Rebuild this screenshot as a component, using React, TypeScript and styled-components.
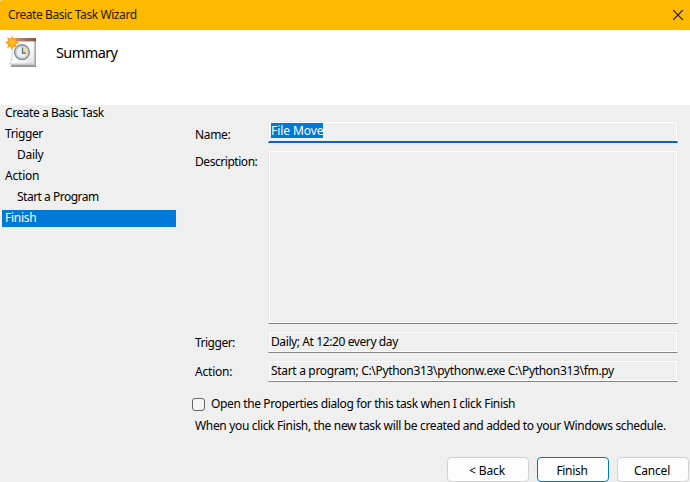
import React from "react";
import styled, { createGlobalStyle } from "styled-components";

const GlobalStyle = createGlobalStyle`
  * { box-sizing: border-box; }
  body { margin: 0; background: #efefef; overflow: hidden; }
`;

const Dialog = styled.div`
  width: 690px;
  height: 482px;
  display: flex;
  flex-direction: column;
  background: #efefef;
  color: #000;
  font: 12px/16px "Noto Sans", "Open Sans", sans-serif;
  overflow: hidden;
  white-space: nowrap;
`;

const Label = styled.span<{ $track?: number }>`
  letter-spacing: ${(p) => p.$track ?? -0.2}px;
`;

const TitleBar = styled.header`
  height: 30px;
  flex: none;
  display: flex;
  align-items: center;
  justify-content: space-between;
  padding: 0 6px 0 8px;
  background: #ffb900;
  color: #1f1800;
  border-top-left-radius: 2px;
`;

const CloseButton = styled.button`
  width: 12px;
  height: 12px;
  padding: 0;
  border: 0;
  background: none;
  svg { display: block; }
`;

const Banner = styled.div`
  height: 75px;
  flex: none;
  display: flex;
  align-items: flex-start;
  background: #fff;
  padding: 5px 0 0 4px;
`;

const Heading = styled.h1`
  margin: 7px 0 0 18px;
  font-size: 14.5px;
  line-height: 20px;
  font-weight: 400;
`;

const Body = styled.div`
  flex: 1;
  display: flex;
  min-height: 0;
`;

const Steps = styled.nav`
  width: 176px;
  flex: none;
  padding-left: 2px;
  display: flex;
  flex-direction: column;
  gap: 4px;
`;

const Step = styled.div<{ $nested?: boolean; $active?: boolean }>`
  height: 17px;
  padding-left: ${(p) => (p.$nested ? 15 : 3)}px;
  line-height: 16px;
  background: ${(p) => (p.$active ? "#0078d7" : "transparent")};
  color: ${(p) => (p.$active ? "#fff" : "#000")};
`;

const Content = styled.main`
  flex: 1;
  display: flex;
  flex-direction: column;
  padding: 16px 0 0 19px;
`;

const Form = styled.div`
  display: grid;
  grid-template-columns: 73px 410px;
  grid-template-rows: 22px 174px 22px 22px;
  row-gap: 7px;
`;

const FieldName = styled.label<{ $drop?: number }>`
  padding-top: ${(p) => p.$drop ?? 4}px;
`;

const Field = styled.div`
  border: 1px solid #e9e9e9;
  border-bottom-color: #858585;
  box-shadow: inset 1px 1px 0 #fff, inset -1px -1px 0 #fff;
  padding: 2px 0 0 2px;
  line-height: 16px;
`;

const FocusedField = styled(Field)`
  border-bottom: 2px solid #0067c0;
  box-shadow: inset 1px 1px 0 #fff, inset -1px 0 0 #fff;
  padding-top: 1px;
`;

const Selection = styled.span`
  display: inline-block;
  height: 15px;
  line-height: 16px;
  background: #0078d7;
  color: #fff;
`;

const Option = styled.label`
  display: flex;
  align-items: center;
  gap: 6px;
  height: 16px;
  margin: 14px 0 0 -3px;
`;

const CheckBox = styled.span`
  width: 13px;
  height: 13px;
  border: 1px solid #666;
  border-radius: 3px;
  background: #f5f5f5;
`;

const Note = styled.p`
  margin: 6px 0 0;
`;

const Actions = styled.footer`
  display: flex;
  justify-content: flex-end;
  gap: 8px;
  margin: 23px 1px 0 0;
`;

const Button = styled.button<{ $width: number; $primary?: boolean }>`
  width: ${(p) => p.$width}px;
  height: 25px;
  padding: 2px 2px 0 0;
  border: 1px solid ${(p) => (p.$primary ? "#0078d4" : "#d0d0d0")};
  border-radius: 4px;
  background: #fdfdfd;
  color: #000;
  font: inherit;
`;

const TaskIcon = () => (
  <svg width="34" height="34" viewBox="0 0 34 34">
    <defs>
      <linearGradient id="paper" x1="0" y1="0" x2="1" y2="1">
        <stop offset="0" stopColor="#fff" />
        <stop offset="0.6" stopColor="#fafafa" />
        <stop offset="1" stopColor="#dedede" />
      </linearGradient>
      <linearGradient id="binding" x1="0" y1="0" x2="1" y2="0">
        <stop offset="0" stopColor="#c99b87" />
        <stop offset="1" stopColor="#855543" />
      </linearGradient>
      <radialGradient id="sun">
        <stop offset="0" stopColor="#ffc52e" />
        <stop offset="1" stopColor="#fba318" />
      </radialGradient>
    </defs>
    <path d="M7 29.5h23V4h2v28H7z" fill="#929292" />
    <path d="M7.5 29.5h23V6h.8v24.3H7.5z" fill="#d2d2d2" />
    <path d="M8 4H30.6v25H5.5Q8 27 8 22z" fill="url(#paper)" stroke="#b5b5b5" strokeWidth=".6" />
    <path d="M8 3h24v3.4H8z" fill="url(#binding)" />
    <circle cx="18" cy="17.2" r="7.3" fill="#dce2e5" stroke="#8a9297" strokeWidth="1.6" />
    <circle cx="18" cy="17.2" r="5.6" fill="#e9f0f5" stroke="#b8c0c5" strokeWidth=".6" />
    <path d="M18.5 17.7V11.7A5.4 5.4 0 0 1 22.5 20z" fill="#f5df9b" />
    <path d="M18.5 12.5v5.6H22" fill="none" stroke="#4b6585" strokeWidth="1.2" />
    <path d="M8.2 .7l1.3 3.1 3.7-1.6-1.4 3.6 3.5 1.9-3.5 1.5 1.4 3.8-3.7-1.4-1.4 3.5-1.6-3.5-3.5 1.4 1.3-3.8L1.1 7.7l3.2-1.9L3 2.3l3.5 1.5z" fill="#f99d1c" />
    <circle cx="8.2" cy="7.7" r="4.3" fill="url(#sun)" />
  </svg>
);

const steps = [
  { name: "Create a Basic Task", track: -0.42 },
  { name: "Trigger", track: -0.4 },
  { name: "Daily", nested: true, track: -0.3 },
  { name: "Action", track: -0.2 },
  { name: "Start a Program", nested: true, track: -0.5 },
  { name: "Finish", active: true, track: -0.25 },
];

export default function App() {
  return (
    <>
      <GlobalStyle />
      <Dialog>
        <TitleBar>
          <Label $track={-0.42}>Create Basic Task Wizard</Label>
          <CloseButton aria-label="Close">
            <svg width="12" height="12" viewBox="0 0 12 12">
              <path d="M1.2 1.2l9.6 9.6m0-9.6l-9.6 9.6" stroke="#201b0b" strokeWidth="1.2" />
            </svg>
          </CloseButton>
        </TitleBar>
        <Banner>
          <TaskIcon />
          <Heading><Label $track={-0.6}>Summary</Label></Heading>
        </Banner>
        <Body>
          <Steps>
            {steps.map((s) => (
              <Step key={s.name} $nested={s.nested} $active={s.active}>
                <Label $track={s.track}>{s.name}</Label>
              </Step>
            ))}
          </Steps>
          <Content>
            <Form>
              <FieldName $drop={6}><Label $track={-0.35}>Name:</Label></FieldName>
              <FocusedField><Selection><Label $track={-0.08}>File Move</Label></Selection></FocusedField>
              <FieldName><Label $track={-0.45}>Description:</Label></FieldName>
              <Field />
              <FieldName><Label $track={-0.5}>Trigger:</Label></FieldName>
              <Field><Label $track={-0.4}>Daily; At 12:20 every day</Label></Field>
              <FieldName><Label $track={-0.2}>Action:</Label></FieldName>
              <Field><Label $track={-0.32}>Start a program; C:\Python313\pythonw.exe C:\Python313\fm.py</Label></Field>
            </Form>
            <Option>
              <CheckBox />
              <Label $track={-0.37}>Open the Properties dialog for this task when I click Finish</Label>
            </Option>
            <Note><Label $track={-0.34}>When you click Finish, the new task will be created and added to your Windows schedule.</Label></Note>
            <Actions>
              <Button $width={82}><Label $track={-0.1}>&lt; Back</Label></Button>
              <Button $width={72} $primary><Label $track={-0.3}>Finish</Label></Button>
              <Button $width={72}><Label $track={-0.2}>Cancel</Label></Button>
            </Actions>
          </Content>
        </Body>
      </Dialog>
    </>
  );
}
